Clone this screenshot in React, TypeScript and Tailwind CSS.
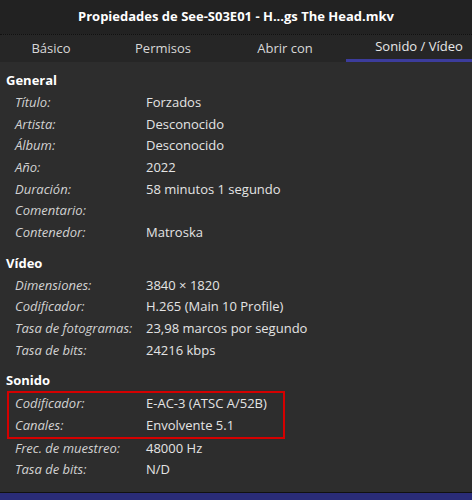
import React from 'react';

type Row = { label: string; value: string };

const general: Row[] = [
  { label: 'Título:', value: 'Forzados' },
  { label: 'Artista:', value: 'Desconocido' },
  { label: 'Álbum:', value: 'Desconocido' },
  { label: 'Año:', value: '2022' },
  { label: 'Duración:', value: '58 minutos 1 segundo' },
  { label: 'Comentario:', value: '' },
  { label: 'Contenedor:', value: 'Matroska' },
];

const video: Row[] = [
  { label: 'Dimensiones:', value: '3840 × 1820' },
  { label: 'Codificador:', value: 'H.265 (Main 10 Profile)' },
  { label: 'Tasa de fotogramas:', value: '23,98 marcos por segundo' },
  { label: 'Tasa de bits:', value: '24216 kbps' },
];

const sonido: Row[] = [
  { label: 'Codificador:', value: 'E-AC-3 (ATSC A/52B)' },
  { label: 'Canales:', value: 'Envolvente 5.1' },
];

const sonidoRest: Row[] = [
  { label: 'Frec. de muestreo:', value: '48000 Hz' },
  { label: 'Tasa de bits:', value: 'N/D' },
];

function InfoRow({ row, boxed }: { row: Row; boxed?: boolean }) {
  return (
    <div className="flex h-[21.67px] items-center whitespace-nowrap">
      <span className={`${boxed ? 'w-[137px] pl-[6px]' : 'w-[146px] pl-[15px]'} shrink-0 italic text-[#d2d2d2]`}>
        {row.label}
      </span>
      <span className="text-[#e4e4e4]">{row.value}</span>
    </div>
  );
}

function Section({ title, children }: { title: string; children: React.ReactNode }) {
  return (
    <div>
      <div className="flex h-[22px] items-center pl-[6px] font-bold text-white">{title}</div>
      {children}
    </div>
  );
}

export default function App() {
  const tabs = [
    { label: 'Básico', w: 'w-[102px]' },
    { label: 'Permisos', w: 'w-[122px]' },
    { label: 'Abrir con', w: 'w-[122px]' },
  ];

  return (
    <div
      className="flex h-[500px] w-[472px] flex-col overflow-hidden bg-[#2d2d2d] text-[13px]"
      style={{ fontFamily: '"Open Sans", "Noto Sans", sans-serif' }}
    >
      {/* Title bar */}
      <div className="flex h-[34px] shrink-0 items-center justify-center bg-[#222222] text-[13px] font-bold text-white">
        Propiedades de See-S03E01 - H...gs The Head.mkv
      </div>

      {/* Tabs */}
      <div className="flex h-[28px] shrink-0 overflow-hidden border-t border-dotted border-[#111] bg-[#262626] text-[#d8d8d8]">
        {tabs.map(t => (
          <div key={t.label} className={`${t.w} flex shrink-0 items-center justify-center`}>
            {t.label}
          </div>
        ))}
        <div className="flex w-[146px] shrink-0 flex-col">
          <div className="flex flex-1 items-center justify-center text-[#e8e8e8]">Sonido / Vídeo</div>
          <div className="h-[3px] bg-[#3c3c9c]" />
        </div>
      </div>

      {/* Content */}
      <div className="flex-1 pt-[8px]">
        <Section title="General">
          {general.map(r => <InfoRow key={r.label} row={r} />)}
        </Section>

        <div className="mt-[9px]">
          <Section title="Vídeo">
            {video.map(r => <InfoRow key={r.label} row={r} />)}
          </Section>
        </div>

        <div className="mt-[9px]">
          <Section title="Sonido">
            <div className="-my-[1px] ml-[7px] w-[278px] border-2 border-[#d40000]">
              {sonido.map(r => <InfoRow key={r.label} row={r} boxed />)}
            </div>
            {sonidoRest.map(r => <InfoRow key={r.label} row={r} />)}
          </Section>
        </div>
      </div>

      <div className="h-[8px] shrink-0 border-t border-[#111] bg-[#2a2c78]" />
    </div>
  );
}
